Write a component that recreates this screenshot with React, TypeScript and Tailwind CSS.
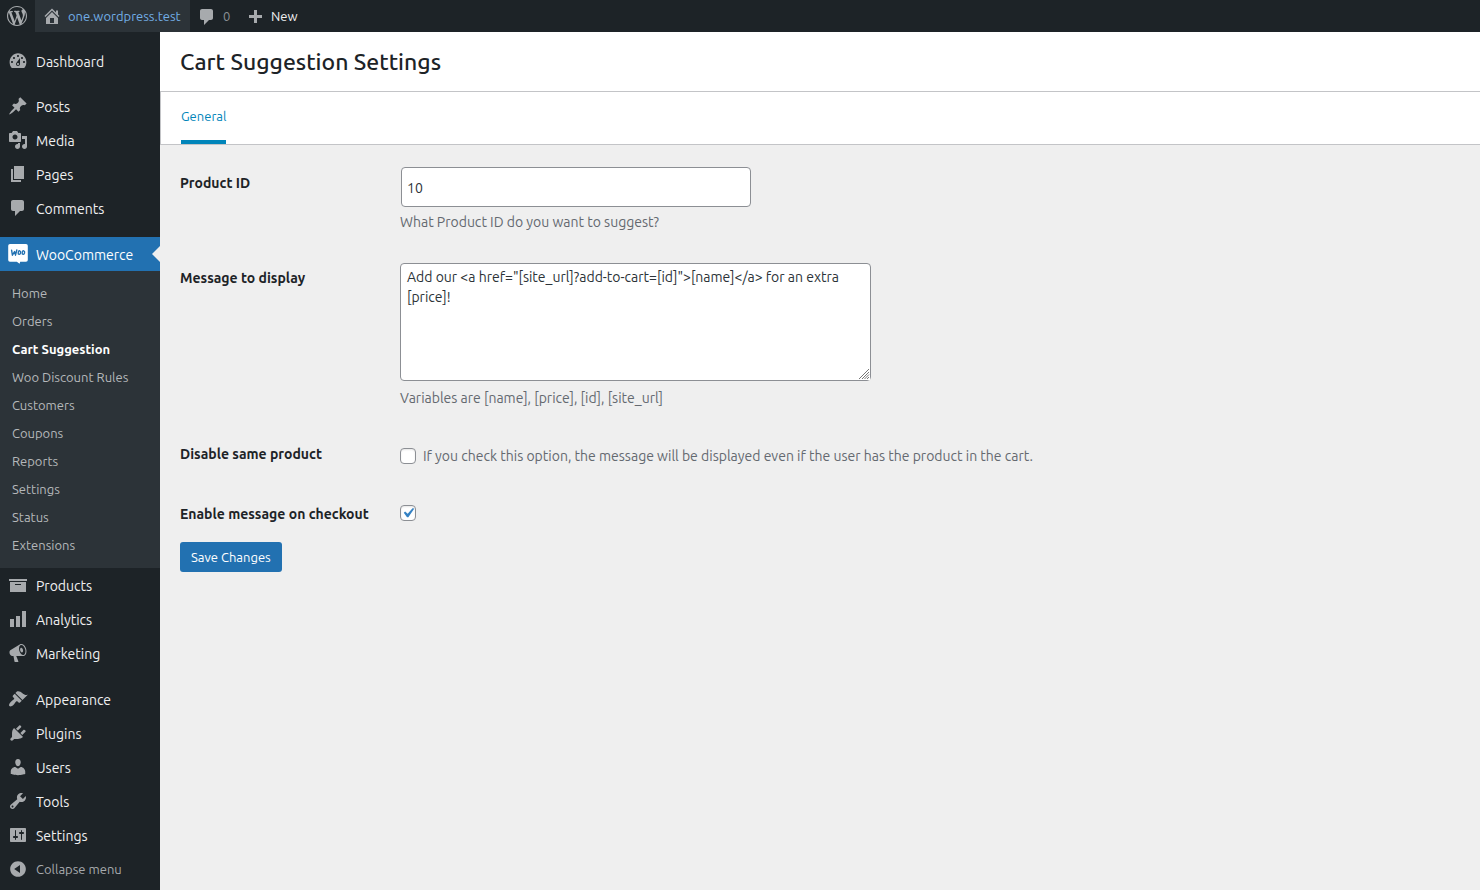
import { useState, type ReactNode } from "react";

const ICONS = {
  wordpress:
    "M20 10c0-5.51-4.49-10-10-10C4.48 0 0 4.49 0 10c0 5.52 4.48 10 10 10 5.51 0 10-4.48 10-10zM7.78 15.37L4.37 6.22c.55-.02 1.17-.08 1.17-.08.5-.06.44-1.13-.06-1.11 0 0-1.45.11-2.37.11-.18 0-.37 0-.58-.01C4.12 2.69 6.87 1.11 10 1.11c2.33 0 4.45.87 6.05 2.34-.68-.11-1.65.39-1.65 1.58 0 .74.45 1.36.9 2.1.35.61.55 1.36.55 2.46 0 1.49-1.4 5-1.4 5l-3.03-8.37c.54-.02.82-.17.82-.17.5-.05.44-1.25-.06-1.22 0 0-1.44.12-2.38.12-.87 0-2.33-.12-2.33-.12-.5-.03-.56 1.2-.06 1.22l.92.08 1.26 3.41zM17.41 10c.24-.64.74-1.87.43-4.25.7 1.29 1.05 2.71 1.05 4.25 0 3.29-1.73 6.24-4.4 7.78.97-2.59 1.94-5.2 2.92-7.78zM6.1 18.09C3.12 16.65 1.11 13.53 1.11 10c0-1.3.23-2.48.72-3.59C3.25 10.3 4.67 14.2 6.1 18.09zm4.03-6.63l2.58 6.98c-.86.29-1.76.45-2.71.45-.79 0-1.57-.11-2.29-.33.81-2.38 1.62-4.74 2.42-7.1z",
  home: "M16 8.5l1.53 1.53-1.06 1.06L10 4.6l-6.47 6.49-1.06-1.06L10 2.5l4 4v-2h2v4zm-6-2.46l6 5.99V18H4v-5.97zM12 17v-5H8v5h4z",
  comments:
    "M5 2h9c1.1 0 2 .9 2 2v7c0 1.1-.9 2-2 2h-2l-5 5v-5H5c-1.1 0-2-.9-2-2V4c0-1.1.9-2 2-2z",
  plus: "M17 7v3h-5v5H9v-5H4V7h5V2h3v5h5z",
  dashboard:
    "M3.76 17h12.48c1.34-1.56 2.15-3.59 2.15-5.81 0-4.97-3.73-9-8.39-9s-8.39 4.03-8.39 9c0 2.22.8 4.25 2.15 5.81zM10 4c.55 0 1 .45 1 1s-.45 1-1 1-1-.45-1-1 .45-1 1-1zM6 6c.55 0 1 .45 1 1s-.45 1-1 1-1-.45-1-1 .45-1 1-1zm8 0c.55 0 1 .45 1 1s-.45 1-1 1-1-.45-1-1 .45-1 1-1zm-5.37 5.55L12 7v6c0 1.1-.9 2-2 2s-2-.9-2-2c0-.57.24-1.08.63-1.45zM4 10c.55 0 1 .45 1 1s-.45 1-1 1-1-.45-1-1 .45-1 1-1zm12 0c.55 0 1 .45 1 1s-.45 1-1 1-1-.45-1-1 .45-1 1-1zm-5 3c0-.55-.45-1-1-1s-1 .45-1 1 .45 1 1 1 1-.45 1-1z",
  post: "M10.44 3.02l1.82-1.82 6.36 6.35-1.83 1.82c-1.05-.68-2.48-.57-3.41.36l-.75.75c-.92.93-1.04 2.35-.35 3.41l-1.83 1.82-2.41-2.41-2.8 2.79c-.42.42-3.38 2.71-3.8 2.29s1.86-3.39 2.28-3.81l2.79-2.79L4.1 9.36l1.83-1.82c1.05.69 2.48.57 3.4-.36l.75-.75c.93-.92 1.05-2.35.36-3.41z",
  media:
    "M13 11V4c0-.55-.45-1-1-1h-1.67L9 1H5L3.67 3H2c-.55 0-1 .45-1 1v7c0 .55.45 1 1 1h10c.55 0 1-.45 1-1zM7 4.5c1.38 0 2.5 1.12 2.5 2.5S8.38 9.5 7 9.5 4.5 8.38 4.5 7 5.62 4.5 7 4.5zM14 6h5v10.5c0 1.38-1.12 2.5-2.5 2.5S14 17.88 14 16.5s1.12-2.5 2.5-2.5c.17 0 .34.02.5.05V9h-3V6zm-4 8.05V13h2v3.5c0 1.38-1.12 2.5-2.5 2.5S7 17.88 7 16.5 8.12 14 9.5 14c.17 0 .34.02.5.05z",
  page: "M6 15V2h10v13H6zm-1 1h8v2H3V5h2v11z",
  archive: "M19 4v2H1V4h18zM2 7h16v10H2V7zm11 3V9H7v1h6z",
  chart: "M18 18V2h-4v16h4zm-6 0V7H8v11h4zm-6 0v-8H2v8h4z",
  megaphone:
    "M18.15 5.94c.46 1.62.38 3.22-.02 4.48-.42 1.28-1.26 2.18-2.3 2.48-.16.06-.26.06-.4.06-.06.02-.12.02-.18.02-.06.02-.14.02-.22.02h-6.8l2.22 5.5c.02.14-.06.26-.14.34-.08.1-.24.16-.34.16H6.95c-.1 0-.26-.06-.34-.16-.08-.08-.16-.2-.14-.34l-1-5.5H4.25l-.02-.02c-.5.06-1.08-.18-1.54-.62s-.88-1.08-1.06-1.88c-.24-.8-.2-1.56-.02-2.2.18-.62.58-1.08 1.06-1.3l.02-.02 9-5.4c.1-.06.18-.1.24-.16.06-.04.14-.08.24-.12.16-.08.28-.12.5-.18 1.04-.3 2.24.1 3.22.98s1.84 2.24 2.26 3.86zm-2.58 5.98h-.02c.4-.1.74-.34 1.04-.7.58-.7.86-1.76.86-3.04 0-.64-.1-1.3-.28-1.98-.34-1.36-1.02-2.5-1.78-3.24s-1.68-1.1-2.46-.88c-.82.22-1.4.96-1.7 2-.32 1.04-.28 2.36.06 3.72.38 1.36 1 2.5 1.8 3.24.78.74 1.62 1.1 2.48.88zm-2.54-7.08c.22-.04.42-.02.62.04.38.16.76.48 1.02 1s.42 1.2.42 1.78c0 .3-.04.56-.12.8-.18.48-.44.84-.86.94-.34.1-.8-.06-1.14-.4s-.64-.86-.78-1.5c-.18-.62-.12-1.24.02-1.72s.48-.84.82-.94z",
  appearance:
    "M14.48 11.06L7.41 3.99l1.5-1.5c.5-.56 2.3-.47 3.51.32 1.21.8 1.43 1.28 2.91 2.1 1.18.64 2.45 1.26 4.45.85zm-.71.71L6.7 4.7 4.93 6.47c-.39.39-.39 1.02 0 1.41l1.06 1.06c.39.39.39 1.03 0 1.42-.6.6-1.43 1.11-2.21 1.69-.35.26-.7.53-1.01.84C1.43 14.23.4 16.08 1.4 17.07c.99 1 2.84-.03 4.18-1.36.31-.31.58-.66.85-1.02.57-.78 1.08-1.61 1.69-2.21.39-.39 1.02-.39 1.41 0l1.06 1.06c.39.39 1.02.39 1.41 0z",
  plugins:
    "M13.11 4.36L9.87 7.6 8 5.73l3.24-3.24c.35-.34 1.05-.2 1.56.32.52.51.66 1.21.31 1.55zm-8 1.77l.91-1.12 9.01 9.01-1.19.84c-.71.71-2.63 1.16-3.82 1.16H6.14L4.9 17.26c-.59.59-1.54.59-2.12 0-.59-.58-.59-1.53 0-2.12l1.24-1.24v-3.88c0-1.13.4-3.19 1.09-3.89zm7.26 3.97l3.24-3.24c.34-.35 1.04-.21 1.55.31.52.51.66 1.21.31 1.55l-3.24 3.25z",
  users:
    "M10 9.25c-2.27 0-2.73-3.44-2.73-3.44C7 4.02 7.82 2 9.97 2c2.16 0 2.98 2.02 2.71 3.81 0 0-.41 3.44-2.68 3.44zm0 2.57L12.72 10c2.39 0 4.52 2.33 4.52 4.53v2.49s-3.65 1.13-7.24 1.13c-3.65 0-7.24-1.13-7.24-1.13v-2.49c0-2.25 1.94-4.48 4.47-4.48z",
  tools:
    "M16.68 9.77c-1.34 1.34-3.3 1.67-4.95.99l-5.41 6.52c-.99.99-2.59.99-3.58 0s-.99-2.59 0-3.57l6.52-5.42c-.68-1.65-.35-3.61.99-4.95 1.28-1.28 3.12-1.62 4.72-1.06l-2.89 2.89 2.82 2.82 2.86-2.87c.53 1.58.18 3.39-1.08 4.65zM3.81 16.21c.4.39 1.04.39 1.43 0 .4-.4.4-1.04 0-1.43-.39-.4-1.03-.4-1.43 0-.39.39-.39 1.03 0 1.43z",
  settings:
    "M18 16V4c0-.55-.45-1-1-1H3c-.55 0-1 .45-1 1v12c0 .55.45 1 1 1h14c.55 0 1-.45 1-1zM8 11h1c.55 0 1 .45 1 1s-.45 1-1 1H8v1.5c0 .28-.22.5-.5.5s-.5-.22-.5-.5V13H6c-.55 0-1-.45-1-1s.45-1 1-1h1V5.5c0-.28.22-.5.5-.5s.5.22.5.5V11zm5-2h-1c-.55 0-1-.45-1-1s.45-1 1-1h1V5.5c0-.28.22-.5.5-.5s.5.22.5.5V7h1c.55 0 1 .45 1 1s-.45 1-1 1h-1v5.5c0 .28-.22.5-.5.5s-.5-.22-.5-.5V9z",
  collapse:
    "M10 2.16c4.33 0 7.84 3.51 7.84 7.84s-3.51 7.84-7.84 7.84S2.16 14.33 2.16 10 5.71 2.16 10 2.16zm2 11.72V6.12L6.18 9.97z",
  check: "M14.83 4.89l1.34.94-5.81 8.38H9.02L5.78 9.67l1.34-1.25 2.57 2.4z",
};

type IconName = keyof typeof ICONS;

function Icon({ name, className }: { name: IconName; className: string }) {
  return (
    <svg viewBox="0 0 20 20" fill="currentColor" aria-hidden="true" className={className}>
      <path d={ICONS[name]} fillRule="evenodd" />
    </svg>
  );
}

function MenuLink({ icon, label }: { icon: IconName; label: string }) {
  return (
    <li>
      <a href="#" className="flex h-[34px] items-center gap-2 pl-2 text-[14px] text-[#f0f0f1]">
        <Icon name={icon} className="size-5 shrink-0 text-[#a7aaad]" />
        <span className="pt-[3px]">{label}</span>
      </a>
    </li>
  );
}

const SUBMENU = [
  "Home",
  "Orders",
  "Cart Suggestion",
  "Woo Discount Rules",
  "Customers",
  "Coupons",
  "Reports",
  "Settings",
  "Status",
  "Extensions",
];

function WooMenu() {
  return (
    <li>
      <a
        href="#"
        className="relative flex h-[34px] items-center gap-2 bg-[#2271b1] pl-2 text-[14px] text-white"
      >
        <svg viewBox="0 0 20 20" aria-hidden="true" className="size-5 shrink-0">
          <path
            d="M2 0h16a1.8 1.8 0 0 1 1.8 1.8v14.2a1.8 1.8 0 0 1-1.8 1.8h-5.8l-.6 2-2.8-2H2A1.8 1.8 0 0 1 .2 16V1.8A1.8 1.8 0 0 1 2 0z"
            fill="#fff"
          />
          <g fill="none" stroke="#2271b1" strokeWidth="1.4" strokeLinecap="round" strokeLinejoin="round">
            <path d="M3.6 6.2l.8 5 2.2-3.6.9 3.600 1.300-5.200" />
            <ellipse cx="11.400" cy="8.600" rx="1.200" ry="1.800" transform="rotate(12 11.400 8.600)" />
            <ellipse cx="15.400" cy="8.600" rx="1.200" ry="1.800" transform="rotate(12 15.400 8.600)" />
          </g>
        </svg>
        <span className="pt-[3px]">WooCommerce</span>
        <svg viewBox="0 0 8 16" aria-hidden="true" className="absolute top-[9px] right-0 h-4 w-2">
          <path d="M8 0v16L0 8z" fill="#efefef" />
        </svg>
      </a>
      <ul className="bg-[#2c3338] pt-[9px] pb-2 text-[13px]">
        {SUBMENU.map((label) => (
          <li key={label}>
            <a
              href="#"
              className={
                label === "Cart Suggestion"
                  ? "flex h-7 items-center pl-3 font-bold text-white"
                  : "flex h-7 items-center pl-3 text-[#b5b8ba]"
              }
            >
              {label}
            </a>
          </li>
        ))}
      </ul>
    </li>
  );
}

function AdminBar() {
  return (
    <header className="flex h-8 items-center bg-[#1d2327] text-[13px] text-[#f0f0f1]">
      <a href="#" aria-label="About WordPress" className="flex h-8 w-[35px] items-center pl-[7px]">
        <Icon name="wordpress" className="size-5 text-[#a7aaad]" />
      </a>
      <a href="#" className="flex h-8 w-[155px] items-center gap-[6px] bg-[#2c3338] pl-[7px] text-[#72aee6]">
        <Icon name="home" className="size-5 text-[#a7aaad]" />
        <span className="pt-0.5">one.wordpress.test</span>
      </a>
      <a href="#" className="flex h-8 w-12 items-center gap-[6px] pl-[7px] text-[#8c9094]">
        <Icon name="comments" className="size-5 translate-y-px text-[#a7aaad]" />
        <span className="pt-0.5">0</span>
      </a>
      <a href="#" className="flex h-8 items-center gap-[6px] pl-[7px]">
        <Icon name="plus" className="size-5 translate-y-0.5 text-[#a7aaad]" />
        <span className="pt-0.5">New</span>
      </a>
    </header>
  );
}

function Sidebar() {
  return (
    <nav className="w-40 shrink-0 bg-[#1d2327] pt-3">
      <ul>
        <MenuLink icon="dashboard" label="Dashboard" />
        <li className="h-[11px]" />
        <MenuLink icon="post" label="Posts" />
        <MenuLink icon="media" label="Media" />
        <MenuLink icon="page" label="Pages" />
        <MenuLink icon="comments" label="Comments" />
        <li className="h-3" />
        <WooMenu />
        <MenuLink icon="archive" label="Products" />
        <MenuLink icon="chart" label="Analytics" />
        <MenuLink icon="megaphone" label="Marketing" />
        <li className="h-3" />
        <MenuLink icon="appearance" label="Appearance" />
        <MenuLink icon="plugins" label="Plugins" />
        <MenuLink icon="users" label="Users" />
        <MenuLink icon="tools" label="Tools" />
        <MenuLink icon="settings" label="Settings" />
      </ul>
      <button type="button" className="flex h-[34px] w-full items-center gap-2 pl-2 text-[13px] text-[#a7aaad]">
        <Icon name="collapse" className="size-5 shrink-0" />
        <span className="pt-0.5">Collapse menu</span>
      </button>
    </nav>
  );
}

function CheckBox({ id, initial }: { id: string; initial: boolean }) {
  const [checked, setChecked] = useState(initial);
  return (
    <span className="grid size-4 shrink-0">
      <input
        id={id}
        type="checkbox"
        checked={checked}
        onChange={(e) => setChecked(e.target.checked)}
        className="col-start-1 row-start-1 size-4 appearance-none rounded-[4px] border border-[#8c8f94] bg-white shadow-[inset_0_1px_2px_rgba(0,0,0,0.1)]"
      />
      {checked && (
        <Icon
          name="check"
          className="pointer-events-none col-start-1 row-start-1 size-5 -translate-x-0.5 -translate-y-0.5 text-[#3582c4]"
        />
      )}
    </span>
  );
}

function Row({ id, label, className, children }: { id: string; label: string; className: string; children: ReactNode }) {
  return (
    <div className={className}>
      <label htmlFor={id} className="w-[220px] shrink-0 text-[14px] leading-5 font-bold text-[#1d2327]">
        {label}
      </label>
      <div className="min-w-0 flex-1 text-[14px] leading-5 text-[#646970]">{children}</div>
    </div>
  );
}

export default function App() {
  const [productId, setProductId] = useState("10");
  const [message, setMessage] = useState(
    'Add our <a href="[site_url]?add-to-cart=[id]">[name]</a> for an extra [price]!',
  );

  return (
    <div className="flex min-h-screen flex-col bg-[#f0f0f1] font-['Ubuntu','Noto_Sans',sans-serif]">
      <AdminBar />
      <div className="flex flex-1">
        <Sidebar />
        <main className="min-w-0 flex-1 bg-[#efefef]">
          <h1 className="flex h-[59px] items-center bg-white pt-0.5 pl-5 text-[23px] font-medium text-[#1d2327]">
            Cart Suggestion Settings
          </h1>
          <div className="flex h-[54px] border-y border-l border-[#c3c4c7] bg-white pl-5">
            <a
              href="#"
              className="flex items-center border-b-4 border-[#0085ba] pt-0.5 text-[13px] text-[#0085ba]"
            >
              General
            </a>
          </div>
          <form className="px-5 pt-[22px]" onSubmit={(e) => e.preventDefault()}>
            <Row id="product-id" label="Product ID" className="flex pb-[31px] *:first:pt-[6px]">
              <input
                id="product-id"
                type="text"
                value={productId}
                onChange={(e) => setProductId(e.target.value)}
                className="ml-px block h-10 w-[350px] rounded-[4px] border border-[#8c8f94] bg-white px-[5px] pt-0.5 text-[14px] text-[#2c3338]"
              />
              <p className="pt-[5px]">What Product ID do you want to suggest?</p>
            </Row>
            <Row id="message" label="Message to display" className="flex pb-9 *:first:pt-[5px]">
              <div className="relative w-fit">
                <textarea
                  id="message"
                  value={message}
                  onChange={(e) => setMessage(e.target.value)}
                  className="block h-[118px] w-[471px] rounded-[4px] border border-[#8c8f94] bg-white px-[6px] py-[3px] text-[14px] leading-5 text-[#2c3338]"
                />
                <svg
                  viewBox="0 0 12 12"
                  aria-hidden="true"
                  className="pointer-events-none absolute right-px bottom-px size-3 bg-white"
                >
                  <path d="M1 11L11 1M4 11l7-7M6.500 11L11 6.500M9 11l2-2" stroke="#777" strokeWidth="1" fill="none" />
                </svg>
              </div>
              <p className="pt-[7px]">Variables are [name], [price], [id], [site_url]</p>
            </Row>
            <Row id="disable-same" label="Disable same product" className="flex pb-[38px]">
              <div className="flex items-center gap-[7px] pt-0.5">
                <CheckBox id="disable-same" initial={false} />
                <p>If you check this option, the message will be displayed even if the user has the product in the cart.</p>
              </div>
            </Row>
            <Row id="enable-checkout" label="Enable message on checkout" className="flex">
              <div className="flex h-[18px] items-center">
                <CheckBox id="enable-checkout" initial />
              </div>
            </Row>
            <button
              type="submit"
              className="mt-[18px] h-[30px] rounded-[3px] bg-[#2271b1] px-[11px] pt-0.5 text-[13px] text-white"
            >
              Save Changes
            </button>
          </form>
        </main>
      </div>
    </div>
  );
}
